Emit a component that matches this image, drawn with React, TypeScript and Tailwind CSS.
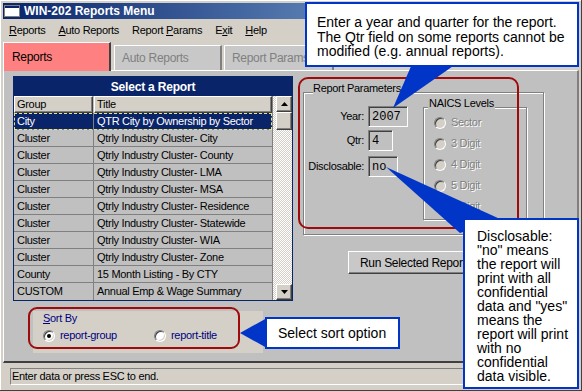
import React from "react";

const reports: [string, string][] = [
  ["City", "QTR City by Ownership by Sector"],
  ["Cluster", "Qtrly Industry Cluster- City"],
  ["Cluster", "Qtrly Industry Cluster- County"],
  ["Cluster", "Qtrly Industry Cluster- LMA"],
  ["Cluster", "Qtrly Industry Cluster- MSA"],
  ["Cluster", "Qtrly Industry Cluster- Residence"],
  ["Cluster", "Qtrly Industry Cluster- Statewide"],
  ["Cluster", "Qtrly Industry Cluster- WIA"],
  ["Cluster", "Qtrly Industry Cluster- Zone"],
  ["County", "15 Month Listing - By CTY"],
  ["CUSTOM", "Annual Emp & Wage Summary"],
];

const naics = ["Sector", "3 Digit", "4 Digit", "5 Digit", "6 Digit"];

const disclosableNote = [
  "Disclosable:",
  '"no" means',
  "the report will",
  "print with all",
  "confidential",
  'data and "yes"',
  "means the",
  "report will print",
  "with no",
  "confidential",
  "data visible.",
];

const raised =
  "border border-t-white border-l-white border-r-[#404040] border-b-[#404040] shadow-[inset_-1px_-1px_0_#808080]";
const sunken =
  "border border-t-[#808080] border-l-[#808080] border-r-white border-b-white shadow-[inset_1px_1px_0_#404040]";
const etched =
  "border border-[#808080] shadow-[inset_1px_1px_0_#ffffff,1px_1px_0_#ffffff]";

function Radio({ checked, disabled }: { checked?: boolean; disabled?: boolean }) {
  return (
    <span
      className={`flex h-[12px] w-[12px] shrink-0 items-center justify-center rounded-full border border-t-[#808080] border-l-[#808080] border-r-white border-b-white shadow-[inset_1px_1px_0_#404040,inset_-1px_-1px_0_#d4d0c8] ${
        disabled ? "bg-[#d4d0c8]" : "bg-white"
      }`}
    >
      {checked && (
        <span className={`h-[4px] w-[4px] rounded-full ${disabled ? "bg-[#808080]" : "bg-black"}`} />
      )}
    </span>
  );
}

function ScrollArrow({ up }: { up?: boolean }) {
  return (
    <svg width="7" height="4" viewBox="0 0 7 4">
      <path d={up ? "M3.5 0 L7 4 L0 4 Z" : "M0 0 L7 0 L3.5 4 Z"} fill="#000" />
    </svg>
  );
}

export default function App() {
  return (
    <div className="relative h-[391px] w-[582px] overflow-hidden bg-[#d4d0c8] font-['Liberation_Sans',Arial,sans-serif] text-[11px] tracking-[-0.3px] text-black shadow-[inset_-1px_-1px_0_#404040,inset_1px_1px_0_#ffffff]">
      <div className="flex h-full flex-col px-[3px] pt-[3px]">
        {/* Title bar */}
        <div className="flex h-[16px] items-center gap-[4px] bg-gradient-to-r from-[#0a246a] to-[#a6caf0] pl-[1px]">
          <svg width="16" height="12" viewBox="0 0 16 12">
            <rect x="0.5" y="0.5" width="15" height="11" fill="#fff" stroke="#808080" />
            <rect x="1" y="1" width="14" height="2" fill="#0a246a" />
          </svg>
          <span className="text-[12px] font-bold tracking-normal text-white">WIN-202 Reports Menu</span>
        </div>

        {/* Menu bar */}
        <div className="flex h-[22px] items-center gap-[13px] pl-[6px]">
          <span>
            <u>R</u>eports
          </span>
          <span>
            <u>A</u>uto Reports
          </span>
          <span>
            Report <u>P</u>arams
          </span>
          <span>
            E<u>x</u>it
          </span>
          <span>
            <u>H</u>elp
          </span>
        </div>

        {/* Tabs */}
        <div className="flex h-[29px] items-end">
          <div className="relative z-10 -mb-px flex h-[29px] w-[108px] items-center border-l border-t border-r-2 border-l-white border-t-white border-r-[#404040] bg-[#ff8080] pl-[8px] text-[12px] tracking-[-0.3px]">
            Reports
          </div>
          <div className="ml-[3px] flex h-[25px] w-[108px] items-center border-l border-t border-r-2 border-l-white border-t-white border-r-[#808080] bg-[#c8c8c8] pl-[7px] text-[12px] text-[#808080]">
            Auto Reports
          </div>
          <div className="ml-[2px] flex h-[25px] w-[110px] items-center border-l border-t border-r-2 border-l-white border-t-white border-r-[#808080] bg-[#c8c8c8] pl-[7px] text-[12px] text-[#808080]">
            Report Params
          </div>
        </div>

        {/* Panel */}
        <div className="flex h-[293px] border-l border-t border-r-2 border-b-2 border-l-white border-t-white border-r-[#808080] border-b-[#404040] bg-[#c0c0c0] pl-[9px] pt-[5px]">
          {/* Left column */}
          <div className="flex w-[280px] flex-col">
            <div className="flex h-[225px] flex-col border border-[#0a246a] bg-[#c0c0c0]">
              <div className="flex h-[19px] items-center justify-center bg-[#0a246a] text-[12px] font-bold tracking-[-0.2px] text-white">
                Select a Report
              </div>
              <div className="flex flex-1">
                <div className="flex w-[258px] flex-col">
                  <div className="flex h-[17px]">
                    <div className={`mr-[1px] flex w-[79px] items-center bg-[#d4d0c8] pl-[2px] ${raised}`}>Group</div>
                    <div className={`flex w-[178px] items-center bg-[#d4d0c8] pl-[2px] ${raised}`}>Title</div>
                  </div>
                  {reports.map(([group, title], i) => (
                    <div
                      key={i}
                      className={`flex h-[17px] border-b border-[#808080] ${
                        i === 0
                          ? "bg-[#0a246a] text-white outline-1 -outline-offset-1 outline-dashed outline-[#e6e68c]"
                          : ""
                      } ${i === reports.length - 1 ? "border-b-0" : ""}`}
                    >
                      <div className="flex w-[80px] items-center border-r border-[#808080] pl-[3px]">{group}</div>
                      <div className="flex flex-1 items-center pl-[3px]">{title}</div>
                    </div>
                  ))}
                </div>
                <div className="flex w-[20px] flex-col border-l border-[#808080] bg-[repeating-conic-gradient(#ffffff_0%_25%,#d4d0c8_0%_50%)] bg-[length:2px_2px] pl-[3px]">
                  <div className={`flex h-[16px] items-center justify-center bg-[#d4d0c8] ${raised}`}>
                    <ScrollArrow up />
                  </div>
                  <div className={`h-[18px] bg-[#d4d0c8] ${raised}`} />
                  <div className="flex-1" />
                  <div className={`flex h-[16px] items-center justify-center bg-[#d4d0c8] ${raised}`}>
                    <ScrollArrow />
                  </div>
                </div>
              </div>
            </div>

            {/* Sort By */}
            <div className="ml-[20px] mt-[10px] flex h-[42px] w-[230px] flex-col bg-[#d4d0c8] pl-[10px] text-[#000080]">
              <span className="mt-[1px] leading-[13px]">
                <u>S</u>ort By
              </span>
              <div className="mt-[4px] flex h-[13px] items-center">
                <div className="flex w-[111px] items-center gap-[5px]">
                  <Radio checked />
                  <span>report-group</span>
                </div>
                <div className="flex items-center gap-[5px]">
                  <Radio />
                  <span>report-title</span>
                </div>
              </div>
            </div>
          </div>

          {/* Right column */}
          <div className="ml-[10px] flex flex-col">
            <div className={`relative mt-[16px] flex h-[143px] w-[241px] ${etched}`}>
              <span className="absolute -top-[11px] left-[9px] bg-[#c0c0c0] pr-[2px] leading-[12px]">Report Parameters</span>
              <div className="flex w-[104px] flex-col">
                <div className="mt-[13px] flex h-[21px] items-center">
                  <span className="w-[60px] text-right">Year:</span>
                  <div className={`ml-[4px] flex h-[21px] w-[40px] items-center pl-[3px] font-['Liberation_Mono',monospace] text-[12px] tracking-normal ${sunken}`}>
                    2007
                  </div>
                </div>
                <div className="mt-[3px] flex h-[21px] items-center">
                  <span className="w-[60px] text-right">Qtr:</span>
                  <div className={`ml-[4px] flex h-[21px] w-[25px] items-center pl-[3px] font-['Liberation_Mono',monospace] text-[12px] tracking-normal ${sunken}`}>
                    4
                  </div>
                </div>
                <div className="mt-[5px] flex h-[21px] items-center">
                  <span className="w-[60px] text-right">Disclosable:</span>
                  <div className={`ml-[4px] flex h-[21px] w-[30px] items-center pl-[3px] font-['Liberation_Mono',monospace] text-[12px] tracking-normal ${sunken}`}>
                    no
                  </div>
                </div>
              </div>
              <div className={`relative ml-[15px] mt-[14px] flex h-[113px] w-[104px] flex-col pl-[10px] pt-[4px] ${etched}`}>
                <span className="absolute -top-[11px] left-[4px] bg-[#c0c0c0] px-[1px] leading-[12px]">NAICS Levels</span>
                {naics.map((n, i) => (
                  <div key={n} className="flex h-[21px] items-center gap-[5px]">
                    <Radio disabled checked={i === naics.length - 1} />
                    <span className="text-[#808080] [text-shadow:1px_1px_0_#ffffff]">{n}</span>
                  </div>
                ))}
              </div>
            </div>
            <div className={`ml-[45px] mt-[16px] flex h-[23px] w-[125px] items-center bg-[#c8c8c8] pl-[11px] text-[12px] ${raised}`}>
              Run Selected Report
            </div>
          </div>
        </div>

        {/* Status bar */}
        <div className="flex-1 pl-[7px] pr-[1px] pt-[5px]">
          <div className={`flex h-[17px] items-center pl-[1px] text-[11px] ${sunken} shadow-none`}>
            Enter data or press ESC to end.
          </div>
        </div>
      </div>

      {/* Annotation outlines */}
      <div className="pointer-events-none absolute left-[298px] top-[77px] h-[152px] w-[221px] rounded-[10px] border-2 border-[#a00a0a]" />
      <div className="pointer-events-none absolute left-[28px] top-[307px] h-[42px] w-[212px] rounded-[9px] border-2 border-[#a00a0a]" />

      {/* Callout pointers */}
      <svg className="pointer-events-none absolute left-0 top-0" width="582" height="391" viewBox="0 0 582 391">
        <polygon points="412,64 456,64 393,108" fill="#0035c8" />
        <polygon points="386,167 460,233 500,219" fill="#0035c8" />
        <polygon points="240,333 267,318 267,348" fill="#0035c8" />
      </svg>

      {/* Callout boxes */}
      <div className="absolute left-[305px] top-[2px] flex h-[65px] w-[274px] flex-col border-2 border-[#0035c8] bg-white pl-[10px] pt-[11px] text-[14px] leading-[14.5px] tracking-normal">
        <span className="h-[14.5px] whitespace-nowrap">Enter a year and quarter for the report.</span>
        <span className="h-[14.5px] whitespace-nowrap">The Qtr field on some reports cannot be</span>
        <span className="h-[14.5px] whitespace-nowrap">modified (e.g. annual reports).</span>
      </div>
      <div className="absolute left-[463px] top-[218px] flex h-[171px] w-[116px] flex-col border-2 border-[#0035c8] bg-white pl-[12px] pt-[9px] text-[14px] leading-[14px] tracking-normal">
        {disclosableNote.map((line, i) => (
          <span key={i} className="h-[14px] whitespace-nowrap">
            {line}
          </span>
        ))}
      </div>
      <div className="absolute left-[265px] top-[317px] flex h-[32px] w-[135px] items-center border-2 border-[#0035c8] bg-white pl-[11px] text-[14px] tracking-normal">
        Select sort option
      </div>
    </div>
  );
}
